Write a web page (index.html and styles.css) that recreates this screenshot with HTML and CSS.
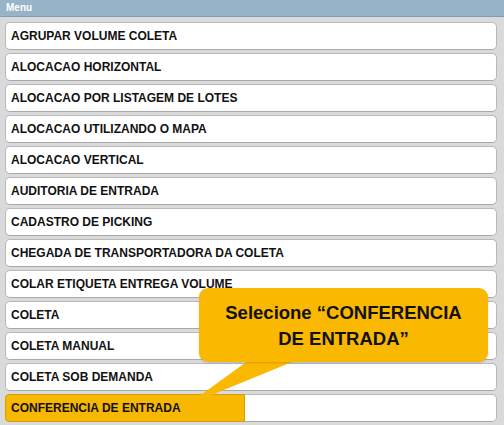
FILE: index.html
```html
<!DOCTYPE html>
<html>
<head>
<meta charset="utf-8">
<link rel="stylesheet" href="styles.css">
</head>
<body>
<div class="header">Menu</div>
<ul class="menu">
  <li class="item">AGRUPAR VOLUME COLETA</li>
  <li class="item">ALOCACAO HORIZONTAL</li>
  <li class="item">ALOCACAO POR LISTAGEM DE LOTES</li>
  <li class="item">ALOCACAO UTILIZANDO O MAPA</li>
  <li class="item">ALOCACAO VERTICAL</li>
  <li class="item">AUDITORIA DE ENTRADA</li>
  <li class="item">CADASTRO DE PICKING</li>
  <li class="item">CHEGADA DE TRANSPORTADORA DA COLETA</li>
  <li class="item">COLAR ETIQUETA ENTREGA VOLUME</li>
  <li class="item">COLETA</li>
  <li class="item">COLETA MANUAL</li>
  <li class="item">COLETA SOB DEMANDA</li>
  <li class="item item-hl"><span class="hl"></span><span class="label">CONFERENCIA DE ENTRADA</span></li>
</ul>
<div class="callout">
  <svg class="tail" width="120" height="50" viewBox="0 0 120 50"><polygon points="64,0 112,0 2,45" fill="#fbb800"/></svg>
  <div class="bubble">Selecione “CONFERENCIA<br>DE ENTRADA”</div>
</div>
</body>
</html>
```
FILE: styles.css
```css
html, body {
  margin: 0;
  padding: 0;
}
body {
  background: #dadada;
  width: 504px;
  height: 425px;
  overflow: hidden;
  position: relative;
  font-family: "Liberation Sans", Arial, sans-serif;
}
.header {
  height: 16px;
  background: #97b4c8;
  border-bottom: 1px solid #7f9db3;
  color: #fff;
  font-weight: bold;
  font-size: 10px;
  line-height: 15px;
  padding-left: 6px;
}
.menu {
  list-style: none;
  margin: 5px 0 0 5px;
  padding: 0;
  width: 492px;
  display: flex;
  flex-direction: column;
  gap: 3px;
}
.item {
  position: relative;
  box-sizing: border-box;
  height: 28px;
  background: #fff;
  border: 1px solid #b9b9b9;
  border-bottom-color: #a9a9a9;
  border-radius: 5px;
  font-weight: bold;
  font-size: 12px;
  line-height: 26px;
  padding-left: 5px;
  color: #111;
}
.hl {
  position: absolute;
  left: -1px;
  top: -1px;
  width: 240px;
  height: 28px;
  box-sizing: border-box;
  background: #f8b700;
  border: 1px solid #d7a000;
  border-radius: 4px 0 0 4px;
}
.label {
  position: relative;
}
.callout {
  position: absolute;
  left: 0;
  top: 0;
}
.bubble {
  position: absolute;
  left: 199px;
  top: 288px;
  width: 289px;
  height: 74px;
  box-sizing: border-box;
  background: #fbb800;
  border-radius: 9px;
  color: #111;
  font-weight: bold;
  font-size: 18.5px;
  line-height: 26px;
  text-align: center;
  padding-top: 12px;
  box-shadow: 0 1px 2px rgba(0,0,0,0.15);
}
.tail {
  position: absolute;
  left: 185px;
  top: 360px;
}
```
